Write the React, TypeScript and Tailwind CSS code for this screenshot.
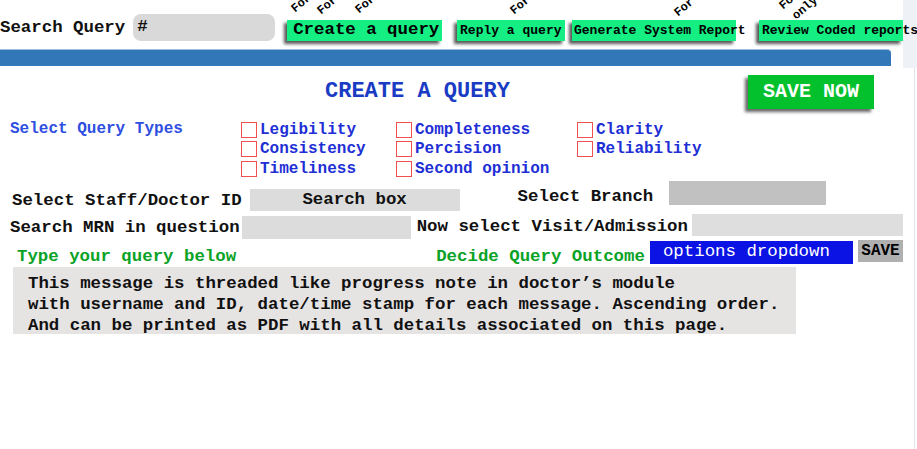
import React from 'react';

const mono = { fontFamily: '"Liberation Mono", "Courier New", monospace' };

const NavButton: React.FC<{ label: string; className: string }> = ({ label, className }) => (
  <div
    className={`h-[21px] bg-[#14ee83] shadow-[-3px_3px_3px_rgba(0,0,0,0.65)] whitespace-nowrap font-bold text-black flex items-center ${className}`}
  >
    {label}
  </div>
);

const Check: React.FC<{ label: string }> = ({ label }) => (
  <div className="h-[19.5px] flex items-center">
    <span className="w-[16px] h-[16px] border border-[#f05050] bg-white shrink-0" />
    <span className="ml-[3px] text-[#1e2fd6] font-bold text-[16px] leading-none whitespace-nowrap">{label}</span>
  </div>
);

const ForTag: React.FC<{ text: string; className: string }> = ({ text, className }) => (
  <span
    className={`absolute text-[12px] font-bold text-black whitespace-nowrap origin-bottom-left -rotate-[40deg] leading-[12px] ${className}`}
  >
    {text}
  </span>
);

const App: React.FC = () => {
  return (
    <div className="w-[917px] h-[449px] bg-white overflow-hidden flex text-[17.4px] text-[#111]" style={mono}>
      <div className="w-[903px] shrink-0 flex flex-col">
        {/* top navigation */}
        <div className="relative h-[49px] flex items-start z-10">
          <ForTag text="For all" className="left-[297px] top-[3px]" />
          <ForTag text="For all" className="left-[323px] top-[5px]" />
          <ForTag text="For all" className="left-[361px] top-[4px]" />
          <ForTag text="For doctors" className="left-[516px] top-[5px]" />
          <ForTag text="For admin" className="left-[680px] top-[7px]" />
          <ForTag text="For coders" className="left-[785px] top-[0px]" />
          <ForTag text="only" className="left-[798px] top-[10px]" />

          <span className="mt-[18px] font-bold whitespace-nowrap leading-[20px]">Search Query</span>
          <div className="ml-[8px] mt-[14px] w-[142px] h-[27px] rounded-lg bg-[#d9d9d9] flex items-center pl-[4px] font-bold">#</div>
          <NavButton label="Create a query" className="ml-[12px] mt-[20px] w-[155px] pl-[6px] text-[17.4px]" />
          <NavButton label="Reply a query" className="ml-[15px] mt-[20px] w-[108px] pl-[3px] text-[13px]" />
          <NavButton label="Generate System Report" className="ml-[7px] mt-[20px] w-[164px] pl-[2px] text-[13px]" />
          <NavButton label="Review Coded reports" className="ml-[23px] mt-[20px] w-[144px] pl-[3px] text-[13px]" />
        </div>

        {/* blue bar */}
        <div className="h-[17px] w-[891px] bg-[#3277b7] border-t border-[#9cc0e2] rounded-tr-[4px]" />

        {/* title row */}
        <div className="mt-[9px] h-[34px] flex items-center">
          <h1 className="ml-[325px] text-[22px] font-bold text-[#1a3bc4] leading-none">CREATE A QUERY</h1>
          <button className="ml-auto mr-[29px] w-[126px] h-[34px] bg-[#03c12c] text-white font-bold text-[20px] shadow-[-3px_3px_3px_rgba(0,0,0,0.6)]">
            SAVE NOW
          </button>
        </div>

        {/* query types */}
        <div className="mt-[11px] flex">
          <div className="w-[241px] pl-[10px] h-[19.5px] flex items-center text-[#2f4fe2] font-bold text-[16px] leading-none -mt-[1px]">
            Select Query Types
          </div>
          <div className="w-[155px] flex flex-col">
            <Check label="Legibility" />
            <Check label="Consistency" />
            <Check label="Timeliness" />
          </div>
          <div className="w-[181px] flex flex-col">
            <Check label="Completeness" />
            <Check label="Percision" />
            <Check label="Second opinion" />
          </div>
          <div className="flex flex-col">
            <Check label="Clarity" />
            <Check label="Reliability" />
          </div>
        </div>

        {/* staff / branch */}
        <div className="mt-[2px] flex items-start font-bold leading-[20px] whitespace-nowrap">
          <span className="ml-[12px] mt-[10px]">Select Staff/Doctor ID</span>
          <div className="ml-[8px] mt-[8px] w-[210px] h-[22px] bg-[#dcdcdc] flex items-center justify-center">Search box</div>
          <span className="ml-[58px] mt-[6px]">Select Branch</span>
          <div className="ml-[16px] w-[157px] h-[24px] bg-[#c1c1c1]" />
        </div>

        {/* mrn / visit */}
        <div className="mt-[3px] flex items-start font-bold leading-[20px] whitespace-nowrap">
          <span className="ml-[10px] mt-[4px]">Search MRN in question</span>
          <div className="ml-[2px] mt-[2px] w-[170px] h-[23px] bg-[#dcdcdc]" />
          <span className="ml-[6px] mt-[3px]">Now select Visit/Admission</span>
          <div className="ml-[4px] w-[211px] h-[22px] bg-[#dedede] shrink-0" />
        </div>

        {/* outcome */}
        <div className="mt-[1px] flex items-start font-bold leading-[20px] whitespace-nowrap">
          <span className="ml-[17px] mt-[7px] text-[#0aa326]">Type your query below</span>
          <span className="ml-[200px] mt-[7px] text-[#0aa326]">Decide Query Outcome</span>
          <div className="ml-[5px] mt-[1px] w-[206px] h-[23px] bg-[#0a12e4] text-white font-normal pl-[13px] flex items-center">
            options dropdown
          </div>
          <div className="ml-[5px] w-[45px] h-[22px] bg-[#b0b0b0] text-black text-[16px] flex items-center justify-center shrink-0">
            SAVE
          </div>
        </div>

        {/* message area */}
        <div className="ml-[13px] w-[783px] h-[67px] bg-[#e6e3e3] pl-[15px] pt-[6px] font-bold leading-[21px] whitespace-nowrap">
          <div>This message is threaded like progress note in doctor’s module</div>
          <div>with username and ID, date/time stamp for each message. Ascending order.</div>
          <div>And can be printed as PDF with all details associated on this page.</div>
        </div>
      </div>

      {/* right rail */}
      <div className="w-[14px] shrink-0 flex flex-col">
        <div className="h-[68px] bg-[#eef1f6]" />
        <div className="flex-1 w-[12px] border-r border-[#e4e4e4]" />
      </div>
    </div>
  );
};

export default App;
